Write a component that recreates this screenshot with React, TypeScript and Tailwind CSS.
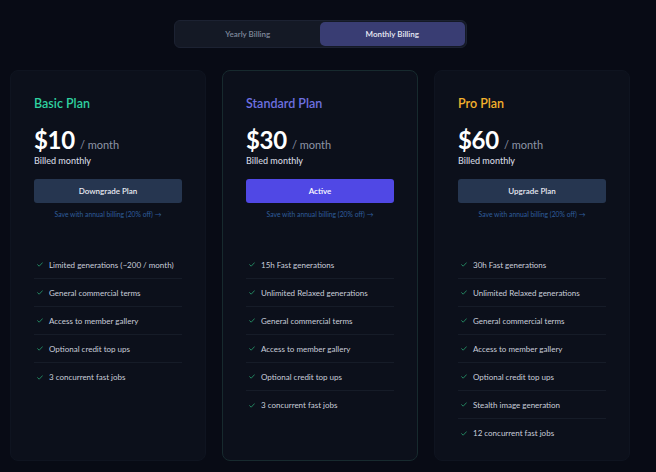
import React from "react";

type Plan = {
  name: string;
  color: string;
  price: string;
  button: string;
  active?: boolean;
  features: string[];
};

const plans: Plan[] = [
  {
    name: "Basic Plan",
    color: "text-[#2fd2a0]",
    price: "$10",
    button: "Downgrade Plan",
    features: [
      "Limited generations (~200 / month)",
      "General commercial terms",
      "Access to member gallery",
      "Optional credit top ups",
      "3 concurrent fast jobs",
    ],
  },
  {
    name: "Standard Plan",
    color: "text-[#6e70e0]",
    price: "$30",
    button: "Active",
    active: true,
    features: [
      "15h Fast generations",
      "Unlimited Relaxed generations",
      "General commercial terms",
      "Access to member gallery",
      "Optional credit top ups",
      "3 concurrent fast jobs",
    ],
  },
  {
    name: "Pro Plan",
    color: "text-[#f4b12c]",
    price: "$60",
    button: "Upgrade Plan",
    features: [
      "30h Fast generations",
      "Unlimited Relaxed generations",
      "General commercial terms",
      "Access to member gallery",
      "Optional credit top ups",
      "Stealth image generation",
      "12 concurrent fast jobs",
    ],
  },
];

function Check() {
  return (
    <svg width="6" height="5" viewBox="0 0 6 5" fill="none" className="shrink-0">
      <path d="M0.6 2.7 L2.2 4.2 L5.4 0.8" stroke="#23845f" strokeWidth="1" strokeLinecap="round" strokeLinejoin="round" />
    </svg>
  );
}

function Card({ plan }: { plan: Plan }) {
  return (
    <div
      className={`h-[391px] w-[196px] rounded-[8px] border bg-[#0c101b] px-[23px] pt-[26px] ${
        plan.active ? "border-[#172a2e]" : "border-[#0f1420]"
      }`}
    >
      <div className={`text-[12.5px] font-semibold leading-[14px] ${plan.color}`}>{plan.name}</div>
      <div className="mt-[15px] flex items-baseline">
        <span className="text-[24px] font-bold leading-[28px] text-white tracking-[-0.3px]">{plan.price}</span>
        <span className="ml-[5px] text-[11px] text-[#8e95a6]">/ month</span>
      </div>
      <div className="mt-[1px] text-[9px] font-medium leading-[12px] text-[#d3d7e0]">Billed monthly</div>
      <div
        className={`mt-[12px] flex h-[24px] items-center justify-center rounded-[3px] text-[8px] font-semibold ${
          plan.active ? "bg-[#5048e5] text-white" : "bg-[#263650] text-[#e6e9f0]"
        }`}
      >
        {plan.button}
      </div>
      <div className="mt-[6px] text-center text-[6.8px] leading-[10px] text-[#2f5d9c]">
        Save with annual billing (20% off) →
      </div>
      <div className="mt-[32px] flex flex-col">
        {plan.features.map((f, i) => (
          <div
            key={f}
            className={`flex h-[28px] items-center gap-[6px] pl-[3px] ${
              i < plan.features.length - 1 ? "border-b border-[#161c28]" : ""
            }`}
          >
            <Check />
            <span className="text-[8px] leading-[10px] text-[#c9ceda]">{f}</span>
          </div>
        ))}
      </div>
    </div>
  );
}

export default function App() {
  return (
    <div
      className="min-h-[472px] w-full bg-[#080b15] pl-[10px] pr-[26px] pt-[20px]"
      style={{ fontFamily: "Lato, 'Liberation Sans', sans-serif" }}
    >
      <div className="flex justify-center">
        <div className="flex h-[28px] w-[293px] rounded-[6px] border border-[#1c2232] bg-[#141925] p-[1px]">
          <div className="flex flex-1 items-center justify-center text-[8px] font-semibold text-[#7f889b]">
            Yearly Billing
          </div>
          <div className="flex flex-1 items-center justify-center rounded-[5px] bg-[#393d73] text-[8px] font-semibold text-[#e9ebf5]">
            Monthly Billing
          </div>
        </div>
      </div>
      <div className="mt-[22px] flex items-start justify-between">
        {plans.map((p) => (
          <Card key={p.name} plan={p} />
        ))}
      </div>
    </div>
  );
}
